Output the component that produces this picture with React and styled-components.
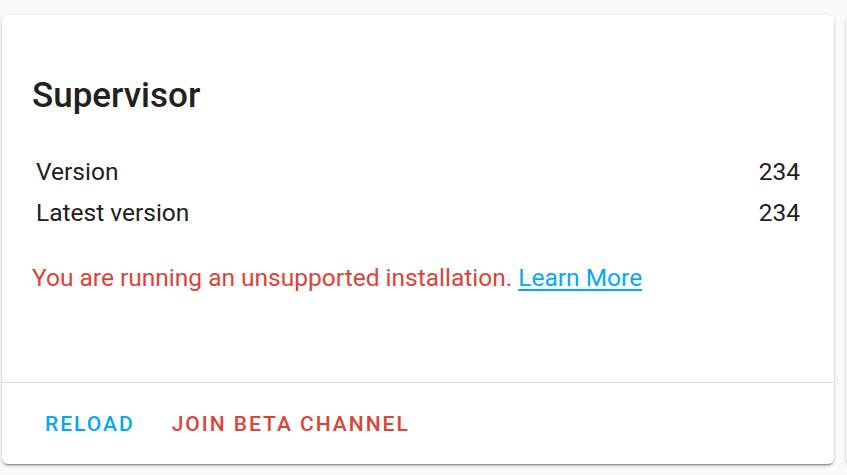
import React from "react";
import styled, { createGlobalStyle } from "styled-components";

const Global = createGlobalStyle`
  html, body { margin: 0; padding: 0; background: #fafafa; overflow: hidden; }
  body { font-family: Roboto, "Noto Sans", sans-serif; color: #212121; }
`;

const Page = styled.div`
  display: flex;
  gap: 12px;
  padding: 15px 0 12px 2px;
  width: 847px;
  box-sizing: border-box;
  overflow: hidden;
`;

const Card = styled.div`
  width: 832px;
  height: 449px;
  background: #fff;
  border-radius: 6px;
  box-shadow: 0 2px 2px 0 rgba(0,0,0,0.2), 0 1px 5px 0 rgba(0,0,0,0.1), 0 3px 1px -2px rgba(0,0,0,0.2);
  display: flex;
  flex-direction: column;
  flex-shrink: 0;
`;

const Body = styled.div`
  flex: 1;
  padding: 57px 34px 0 30px;
`;

const Title = styled.h1`
  margin: 0;
  font-size: 35px;
  font-weight: 500;
  line-height: 48px;
  color: #212121;
`;

const Table = styled.div`
  margin: 31px 0 0 4px;
  display: flex;
  flex-direction: column;
`;

const Row = styled.div`
  display: flex;
  justify-content: space-between;
  height: 41px;
  line-height: 41px;
  font-size: 24.5px;
  color: #212121;
`;

const Warning = styled.div`
  margin-top: 27px;
  font-size: 24.5px;
  line-height: 36px;
  color: #db4437;
`;

const Link = styled.a`
  color: #03a9f4;
  text-decoration: underline;
  text-underline-offset: 3px;
  text-decoration-thickness: 2px;
`;

const Actions = styled.div`
  border-top: 1.5px solid #e0e0e0;
  height: 81px;
  display: flex;
  align-items: center;
  gap: 37px;
  padding-left: 43px;
`;

const Button = styled.button`
  background: none;
  border: none;
  padding: 0;
  font-family: Roboto, "Noto Sans", sans-serif;
  font-size: 21px;
  font-weight: 500;
  letter-spacing: 0.095em;
  text-transform: uppercase;
  color: ${(p) => (p.$danger ? "#db4437" : "#03a9f4")};
  cursor: pointer;
`;

export default function App() {
  return (
    <>
      <Global />
      <Page>
        <Card>
          <Body>
            <Title>Supervisor</Title>
            <Table>
              <Row>
                <span>Version</span>
                <span>234</span>
              </Row>
              <Row>
                <span>Latest version</span>
                <span>234</span>
              </Row>
            </Table>
            <Warning>
              You are running an unsupported installation. <Link href="#">Learn More</Link>
            </Warning>
          </Body>
          <Actions>
            <Button>Reload</Button>
            <Button $danger>Join beta channel</Button>
          </Actions>
        </Card>
        <Card />
      </Page>
    </>
  );
}
